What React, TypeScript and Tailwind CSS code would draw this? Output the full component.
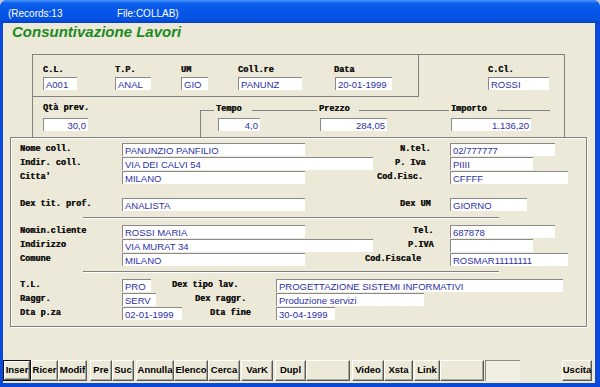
import React from "react";

const LBL =
  "font-['Liberation_Mono','Courier_New',monospace] font-bold text-[8.5px] leading-[9px] text-[#151515] [text-shadow:0.35px_0_0_#151515] whitespace-pre";
const INP =
  "h-[13px] shrink-0 bg-white border-t border-l border-[#8a8a8a] pl-[2px] font-['Liberation_Sans_Narrow','Arial_Narrow','Liberation_Sans',sans-serif] text-[9.5px] leading-[13px] text-[#2d31a6] whitespace-nowrap overflow-hidden";

function Field({ w, v = "", right }: { w: string; v?: string; right?: boolean }) {
  return <div className={`${INP} ${w} ${right ? "text-right pr-[2px]" : ""}`}>{v}</div>;
}

function Lbl({ children }: { children: React.ReactNode }) {
  return <span className={LBL}>{children}</span>;
}

function LeftLbl({ t }: { t: string }) {
  return (
    <div className="w-[111px] shrink-0 pl-[9px] h-[13px] flex items-center">
      <Lbl>{t}</Lbl>
    </div>
  );
}

function Btn({
  t = "",
  w,
  className = "",
  def,
  sunken,
}: {
  t?: string;
  w: string;
  className?: string;
  def?: boolean;
  sunken?: boolean;
}) {
  if (sunken) {
    return (
      <div
        className={`${w} ${className} h-[21px] shrink-0 border-t border-l border-[#8d8b80] border-b-white border-r-white bg-[#f1efe4]`}
      />
    );
  }
  return (
    <div
      className={`${w} ${className} h-[21px] shrink-0 ${
        def ? "border border-[#111]" : ""
      } bg-[#ece9d8]`}
    >
      <div className="h-full w-full border-t border-l border-white border-b border-r border-b-[#5a5a55] border-r-[#5a5a55] shadow-[inset_-1px_-1px_0_#a9a79b] flex items-center justify-center font-['Liberation_Sans',Arial,sans-serif] font-bold text-[9.5px] text-black">
        {t}
      </div>
    </div>
  );
}

export default function App() {
  return (
    <div className="w-[600px] h-[387px] bg-[#c8cbd6] overflow-hidden">
      <div className="w-[600px] h-[387px] rounded-t-[7px] bg-[#0a49dc] flex flex-col">
        {/* Title bar */}
        <div className="h-[23px] shrink-0 rounded-t-[7px] bg-[linear-gradient(to_bottom,#4a97ff_0%,#0e62ee_14%,#0656e8_45%,#0552e2_85%,#0440c6_100%)] flex items-center pl-[8px] pt-[3px] font-['Liberation_Sans',Arial,sans-serif] text-[10px] text-white">
          <span className="w-[109px]">(Records:13</span>
          <span>File:COLLAB)</span>
        </div>
        {/* Client */}
        <div className="ml-[3px] mr-[5px] h-[360px] bg-[#ece9d8] flex flex-col">
          <div className="pl-[9px] h-[17px] font-['Liberation_Sans',Arial,sans-serif] font-bold italic text-[15px] leading-[17px] text-[#1c8a24]">
            Consuntivazione Lavori
          </div>

          {/* Upper section */}
          <div className="ml-[29px] mt-[14px] w-[533px] h-[83px] border-t border-l border-r border-[#818181] flex flex-col">
            <div className="flex">
              <div className="w-[386px] h-[42px] border-r border-b border-[#818181] flex pt-[11px]">
                <div className="ml-[10px] w-[34px] flex flex-col gap-[2px]">
                  <Lbl>C.L.</Lbl>
                  <Field w="w-[34px]" v="A001" />
                </div>
                <div className="ml-[38px] w-[36px] flex flex-col gap-[2px]">
                  <Lbl>T.P.</Lbl>
                  <Field w="w-[36px]" v="ANAL" />
                </div>
                <div className="ml-[30px] w-[27px] flex flex-col gap-[2px]">
                  <Lbl>UM</Lbl>
                  <Field w="w-[27px]" v="GIO" />
                </div>
                <div className="ml-[30px] w-[64px] flex flex-col gap-[2px]">
                  <Lbl>Coll.re</Lbl>
                  <Field w="w-[64px]" v="PANUNZ" />
                </div>
                <div className="ml-[32px] w-[58px] flex flex-col gap-[2px]">
                  <Lbl>Data</Lbl>
                  <div className="pl-[1px]">
                    <Field w="w-[57px]" v="20-01-1999" />
                  </div>
                </div>
              </div>
              <div className="ml-[69px] w-[61px] pt-[11px] flex flex-col gap-[2px]">
                <Lbl>C.Cl.</Lbl>
                <Field w="w-[61px]" v="ROSSI" />
              </div>
            </div>
            <div className="flex">
              <div className="ml-[10px] w-[45px] pt-[7px] flex flex-col gap-[5px]">
                <Lbl>Qtà prev.</Lbl>
                <Field w="w-[45px]" v="30,0" right />
              </div>
              <div className="ml-[112px] mt-[13px] w-[350px] h-[27px] border-t border-l border-[#818181] flex flex-col">
                <div className="-mt-[6px] h-[9px] flex">
                  <span className={`${LBL} ml-[13px] w-[38px] pl-[2px] bg-[#ece9d8]`}>Tempo</span>
                  <span className={`${LBL} ml-[65px] w-[42px] pl-[2px] bg-[#ece9d8]`}>Prezzo</span>
                  <span className={`${LBL} ml-[90px] w-[48px] pl-[2px] bg-[#ece9d8]`}>Importo</span>
                </div>
                <div className="mt-[4px] flex">
                  <div className="ml-[17px]">
                    <Field w="w-[42px]" v="4,0" right />
                  </div>
                  <div className="ml-[60px]">
                    <Field w="w-[67px]" v="284,05" right />
                  </div>
                  <div className="ml-[64px]">
                    <Field w="w-[80px]" v="1.136,20" right />
                  </div>
                </div>
              </div>
            </div>
          </div>

          {/* Main box */}
          <div className="ml-[7px] w-[577px] h-[190px] border border-[#818181] shadow-[inset_1px_1px_0_#fff,1px_1px_0_#fff] pt-[5px] flex flex-col">
            <div className="flex h-[14px]">
              <LeftLbl t="Nome coll." />
              <Field w="w-[183px]" v="PANUNZIO PANFILIO" />
              <div className="w-[145px] shrink-0 pl-[95px] h-[13px] flex items-center">
                <Lbl>N.tel.</Lbl>
              </div>
              <Field w="w-[105px]" v="02/777777" />
            </div>
            <div className="flex h-[14px]">
              <LeftLbl t="Indir. coll." />
              <Field w="w-[251px]" v="VIA DEI CALVI 54" />
              <div className="w-[77px] shrink-0 pl-[22px] h-[13px] flex items-center">
                <Lbl>P. Iva</Lbl>
              </div>
              <Field w="w-[83px]" v="PIIII" />
            </div>
            <div className="flex h-[14px]">
              <LeftLbl t="Citta'" />
              <Field w="w-[183px]" v="MILANO" />
              <div className="w-[145px] shrink-0 pl-[72px] h-[13px] flex items-center">
                <Lbl>Cod.Fisc.</Lbl>
              </div>
              <Field w="w-[118px]" v="CFFFF" />
            </div>
            <div className="flex h-[14px] mt-[13px]">
              <LeftLbl t="Dex tit. prof." />
              <Field w="w-[183px]" v="ANALISTA" />
              <div className="w-[145px] shrink-0 pl-[95px] h-[13px] flex items-center">
                <Lbl>Dex UM</Lbl>
              </div>
              <Field w="w-[77px]" v="GIORNO" />
            </div>
            <div className="ml-[72px] mt-[5px] w-[416px] h-[2px] border-t border-[#818181] border-b border-b-white" />
            <div className="flex h-[14px] mt-[6px]">
              <LeftLbl t="Nomin.cliente" />
              <Field w="w-[183px]" v="ROSSI MARIA" />
              <div className="w-[145px] shrink-0 pl-[108px] h-[13px] flex items-center">
                <Lbl>Tel.</Lbl>
              </div>
              <Field w="w-[105px]" v="687878" />
            </div>
            <div className="flex h-[14px]">
              <LeftLbl t="Indirizzo" />
              <Field w="w-[251px]" v="VIA MURAT 34" />
              <div className="w-[77px] shrink-0 pl-[35px] h-[13px] flex items-center">
                <Lbl>P.IVA</Lbl>
              </div>
              <Field w="w-[83px]" />
            </div>
            <div className="flex h-[14px]">
              <LeftLbl t="Comune" />
              <Field w="w-[183px]" v="MILANO" />
              <div className="w-[145px] shrink-0 pl-[60px] h-[13px] flex items-center">
                <Lbl>Cod.Fiscale</Lbl>
              </div>
              <Field w="w-[118px]" v="ROSMAR11111111" />
            </div>
            <div className="ml-[72px] mt-[4px] w-[416px] h-[2px] border-t border-[#818181] border-b border-b-white" />
            <div className="flex h-[14px] mt-[6px]">
              <LeftLbl t="T.L." />
              <Field w="w-[29px]" v="PRO" />
              <div className="w-[125px] shrink-0 pl-[21px] h-[13px] flex items-center">
                <Lbl>Dex tipo lav.</Lbl>
              </div>
              <Field w="w-[287px]" v="PROGETTAZIONE SISTEMI INFORMATIVI" />
            </div>
            <div className="flex h-[14px]">
              <LeftLbl t="Raggr." />
              <Field w="w-[34px]" v="SERV" />
              <div className="w-[120px] shrink-0 pl-[39px] h-[13px] flex items-center">
                <Lbl>Dex raggr.</Lbl>
              </div>
              <Field w="w-[148px]" v="Produzione servizi" />
            </div>
            <div className="flex h-[14px]">
              <LeftLbl t="Dta p.za" />
              <Field w="w-[60px]" v="02-01-1999" />
              <div className="w-[94px] shrink-0 pl-[28px] h-[13px] flex items-center">
                <Lbl>Dta fine</Lbl>
              </div>
              <Field w="w-[59px]" v="30-04-1999" />
            </div>
          </div>

          {/* Buttons */}
          <div className="mt-auto mb-[2px] flex h-[21px]">
            <Btn t="Inser" w="w-[28px]" def />
            <Btn t="Ricer" w="w-[27px]" />
            <Btn t="Modif" w="w-[29px]" />
            <Btn t="Pre" w="w-[22px]" className="ml-[3px]" />
            <Btn t="Suc" w="w-[22px]" />
            <Btn t="Annulla" w="w-[38px]" className="ml-[2px]" />
            <Btn t="Elenco" w="w-[34px]" />
            <Btn t="Cerca" w="w-[32px]" />
            <Btn t="VarK" w="w-[32px]" className="ml-[1px]" />
            <Btn t="Dupl" w="w-[31px]" className="ml-[2px]" />
            <Btn w="w-[44px]" />
            <Btn t="Video" w="w-[32px]" className="ml-[2px]" />
            <Btn t="Xsta" w="w-[29px]" />
            <Btn t="Link" w="w-[26px]" className="ml-[1px]" />
            <Btn w="w-[44px]" />
            <Btn w="w-[35px]" className="ml-[1px]" sunken />
            <Btn t="Uscita" w="w-[30px]" className="ml-[42px]" />
          </div>
        </div>
      </div>
    </div>
  );
}
